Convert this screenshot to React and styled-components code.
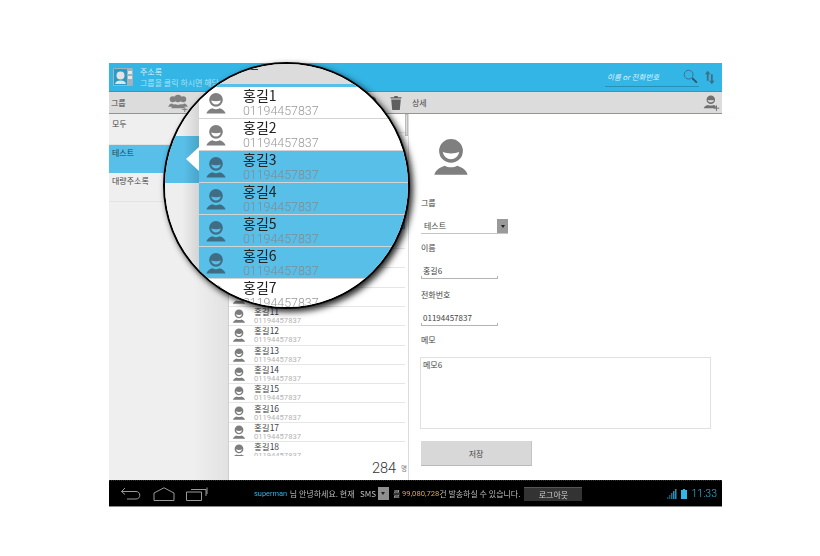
import React from 'react';
import styled, { createGlobalStyle } from 'styled-components';

const KO = `"Noto Sans CJK KR", "Liberation Sans", sans-serif`;
const NUM = `Roboto, "Noto Sans CJK KR", sans-serif`;
const BLUE = '#33b5e5';
const ROW_BLUE = '#58bfe9';

const GlobalStyle = createGlobalStyle`
    html, body { margin: 0; padding: 0; background: #fff; }
    body { font-family: ${KO}; }
`;

const Page = styled.div`
    position: relative;
    width: 613px;
    height: 444px;
    margin: 63px 0 0 109px;
    display: flex;
    flex-direction: column;
    filter: blur(0.3px);
`;

const Header = styled.header`
    height: 28px;
    flex: none;
    display: flex;
    align-items: center;
    background: ${BLUE};
    padding: 0 7px 0 4px;
    box-sizing: border-box;
`;

const AppIcon = styled.svg`
    width: 20px;
    height: 20px;
    flex: none;
`;

const TitleBlock = styled.div`
    margin-left: 7px;
    flex: 1;
    color: #d8f3fc;
`;

const Title = styled.div`
    font-size: 8px;
    line-height: 11px;
`;

const Subtitle = styled.div`
    font-size: 8px;
    line-height: 11px;
    color: #a9e3f7;
`;

const Search = styled.div`
    width: 94px;
    height: 20px;
    margin-right: 6px;
    display: flex;
    align-items: center;
    justify-content: space-between;
    border-bottom: 1px solid #2a8fb8;
    box-sizing: border-box;
    padding: 0 1px 0 2px;
`;

const SearchHint = styled.span`
    font-size: 7.5px;
    font-style: italic;
    color: #d8f3fc;
`;

const Toolbar = styled.div`
    height: 23px;
    flex: none;
    display: grid;
    grid-template-columns: 119px 181px 1fr;
    background: #dcdcdc;
    border-top: 1px solid #2a9ac8;
    border-bottom: 1px solid ${BLUE};
    box-sizing: border-box;
`;

const ToolGroup = styled.div`
    display: flex;
    align-items: center;
    justify-content: ${(p) => p.$justify || 'space-between'};
    padding: 0 ${(p) => p.$right || 0}px 0 ${(p) => p.$left || 0}px;
    color: #5f5f5f;
`;

const ToolLabel = styled.span`
    font-size: 8px;
    color: #444;
`;

const HiddenTool = styled.span`
    display: flex;
    margin-right: 11px;
`;

const Content = styled.div`
    flex: 1;
    min-height: 0;
    display: grid;
    grid-template-columns: 119px 181px 1fr;
`;

const Groups = styled.div`
    background: linear-gradient(to right, #efefef 70%, #e2e2e2);
    padding-top: 2px;
`;

const GroupRow = styled.div`
    height: 28.5px;
    box-sizing: border-box;
    padding: 2px 0 0 3px;
    font-size: 8px;
    color: ${(p) => (p.$active ? '#23414f' : '#444')};
    background: ${(p) => (p.$active ? ROW_BLUE : 'transparent')};
    border-bottom: 1px solid ${(p) => (p.$active ? ROW_BLUE : '#e2e2e2')};
`;

const ListPanel = styled.div`
    position: relative;
    display: flex;
    flex-direction: column;
    background: #fff;
    border-left: 1px solid #cfcfcf;
    border-right: 1px solid #dcdcdc;
    min-height: 0;
`;

const Rows = styled.div`
    height: 342px;
    overflow: hidden;
    padding-right: 3px;
`;

const Row = styled.div`
    height: 19.3px;
    box-sizing: border-box;
    display: flex;
    align-items: center;
    padding-left: 3px;
    background: ${(p) => (p.$active ? ROW_BLUE : '#fff')};
    border-bottom: 1px solid #e6e6e6;
    color: ${(p) => (p.$active ? '#3f6d85' : '#7d7d7d')};
`;

const RowText = styled.div`
    margin-left: 8px;
`;

const RowName = styled.div`
    font-size: 8.5px;
    line-height: 10px;
    color: #444;
`;

const RowPhone = styled.div`
    font-family: ${NUM};
    font-size: 7.6px;
    line-height: 10px;
    color: #b4b4b4;
`;

const Scrollbar = styled.div`
    position: absolute;
    top: 0;
    right: 0;
    width: 3px;
    height: 22px;
    background: #ddd;
    border: 1px solid #bbb;
    box-sizing: border-box;
`;

const ListFooter = styled.div`
    flex: 1;
    display: flex;
    align-items: center;
    justify-content: flex-end;
    padding-right: 1px;
`;

const Count = styled.span`
    font-family: ${NUM};
    font-weight: 300;
    font-size: 14.5px;
    color: #333;
`;

const CountUnit = styled.span`
    font-size: 6.5px;
    color: #777;
    margin-left: 5px;
`;

const Detail = styled.div`
    background: #fff;
    padding: 23px 11px 0 12px;
`;

const BigAvatar = styled.svg`
    display: block;
    width: 38px;
    height: 39px;
    margin-left: 11px;
    color: #7f7f7f;
    filter: blur(0.5px);
`;

const FieldLabel = styled.div`
    height: 12px;
    line-height: 12px;
    font-size: 8px;
    color: #444;
    margin-top: ${(p) => p.$top}px;
`;

const UnderlineField = styled.div`
    position: relative;
    width: ${(p) => p.$width}px;
    height: 15px;
    margin-top: 10px;
    padding-left: 2px;
    box-sizing: border-box;
    font-size: 8px;
    line-height: 14px;
    color: #444;
    border-bottom: 1px solid #b4b4b4;
    &::before,
    &::after {
        content: '';
        position: absolute;
        bottom: 0;
        width: 1px;
        height: 2px;
        background: #b4b4b4;
    }
    &::before {
        left: 0;
    }
    &::after {
        right: 0;
    }
`;

const SelectField = styled.div`
    width: 87px;
    height: 15px;
    margin-top: 10px;
    display: flex;
    justify-content: space-between;
    padding-left: 3px;
    box-sizing: border-box;
    font-size: 8px;
    line-height: 14px;
    color: #444;
    border-bottom: 1px solid #c4c4c4;
`;

const SelectArrow = styled.span`
    width: 11px;
    height: 14px;
    background: #9a9a9a;
    display: flex;
    align-items: center;
    justify-content: center;
    &::after {
        content: '';
        border-left: 2.5px solid transparent;
        border-right: 2.5px solid transparent;
        border-top: 3px solid #222;
    }
`;

const Memo = styled.div`
    width: 291px;
    height: 72px;
    margin: 11px 0 0 -1px;
    padding: 1px 2px;
    box-sizing: border-box;
    border: 1px solid #e0e0e0;
    font-size: 8px;
    line-height: 12px;
    color: #444;
`;

const SaveButton = styled.div`
    width: 111px;
    height: 25px;
    margin-top: 12px;
    background: #d8d8d8;
    border-right: 1px solid #c4c4c4;
    border-bottom: 1px solid #b8b8b8;
    box-sizing: border-box;
    display: flex;
    align-items: center;
    justify-content: center;
    font-size: 8px;
    color: #444;
`;

const NavBar = styled.div`
    height: 27px;
    flex: none;
    box-sizing: border-box;
    background: #000;
    border-top: 1px dotted #333;
    border-bottom: 1px solid #8a8a8a;
    display: flex;
    align-items: center;
    padding: 0 5px 0 11px;
    color: #bdbdbd;
    font-size: 8px;
`;

const NavIcons = styled.div`
    display: flex;
    gap: 11px;
    margin-right: 46px;
`;

const NavText = styled.div`
    display: flex;
    align-items: center;
    white-space: pre;
`;

const UserName = styled.span`
    color: ${BLUE};
    font-family: ${NUM};
    font-size: 7.4px;
    margin-right: 1px;
`;

const Amount = styled.span`
    color: #e6a23c;
    font-family: ${NUM};
    font-size: 7.6px;
`;

const SmsPicker = styled.span`
    width: 11px;
    height: 13px;
    background: #8f8f8f;
    margin: 0 4px 0 2px;
    display: flex;
    align-items: center;
    justify-content: center;
    &::after {
        content: '';
        border-left: 2.5px solid transparent;
        border-right: 2.5px solid transparent;
        border-top: 3px solid #222;
    }
`;

const LogoutButton = styled.div`
    width: 58px;
    height: 14px;
    margin-left: 4px;
    background: #333;
    border-top: 1px solid #555;
    box-sizing: border-box;
    text-align: center;
    line-height: 13px;
    color: #cfcfcf;
`;

const StatusArea = styled.div`
    margin-left: auto;
    display: flex;
    align-items: center;
    gap: 4px;
`;

const Clock = styled.span`
    font-family: ${NUM};
    font-weight: 300;
    font-size: 10.5px;
    color: ${BLUE};
`;

/* magnified part of the list, lies over the page */
const Lens = styled.div`
    position: absolute;
    left: 54px;
    top: -1px;
    width: 247px;
    height: 247px;
    box-sizing: border-box;
    border: 2px solid #000;
    border-radius: 50%;
    overflow: hidden;
    background: #fff;
    display: flex;
    flex-direction: column;
    box-shadow: 3px 3px 6px rgba(0, 0, 0, 0.85);
`;

const LensTop = styled.div`
    height: 20px;
    flex: none;
    background: #dcdcdc;
    border-bottom: 3px solid ${ROW_BLUE};
    display: flex;
    justify-content: center;
`;

const LensTick = styled.span`
    width: 12px;
    height: 1px;
    background: #333;
    margin: 5px 70px 0 0;
`;

const LensBody = styled.div`
    flex: 1;
    min-height: 0;
    display: grid;
    grid-template-columns: 34px 1fr;
`;

const LensSide = styled.div`
    position: relative;
    background: linear-gradient(to right, #eeeeee 50%, #d4d4d4);
    padding-top: 49px;
`;

const LensSelected = styled.div`
    position: relative;
    height: 47px;
    background: linear-gradient(to right, ${ROW_BLUE} 55%, #4aa4c8);
    &::after {
        content: '';
        position: absolute;
        right: 0;
        top: 11px;
        border-top: 12.5px solid transparent;
        border-bottom: 12.5px solid transparent;
        border-right: 13px solid #fff;
    }
`;

const LensList = styled.div`
    min-width: 0;
`;

const LensRow = styled.div`
    height: 32px;
    box-sizing: border-box;
    display: flex;
    align-items: center;
    padding-left: 6px;
    background: ${(p) => (p.$active ? ROW_BLUE : '#fff')};
    border-bottom: 1px solid #d4d4d4;
    color: ${(p) => (p.$active ? '#3f6d85' : '#808080')};
`;

const LensText = styled.div`
    margin-left: 16px;
    padding-top: 1px;
    white-space: nowrap;
`;

const LensName = styled.div`
    font-size: 14px;
    line-height: 15px;
    color: #222;
`;

const LensPhone = styled.div`
    font-family: ${NUM};
    font-weight: 300;
    font-size: 12.4px;
    line-height: 15px;
    color: ${(p) => (p.$active ? '#7f8b92' : '#999')};
`;

const Person = ({ size = 14, ...rest }) => (
    <svg width={size} height={size} viewBox="0 0 24 24" style={{ flex: 'none' }} {...rest}>
        <path
            fill="currentColor"
            fillRule="evenodd"
            d="M12 1a7.500 7.500 0 1 1 0 15a7.500 7.500 0 0 1 0-15zM6.800 9.200c1.500.6 3.200.9 5.200.9s3.700-.3 5.200-.9c-.6 2.800-2.700 4.500-5.200 4.500s-4.600-1.700-5.200-4.500z"
        />
        <path fill="currentColor" d="M1.500 23.500c.8-3 3.500-4.700 6.500-5.700 2.500 1.300 5.500 1.300 8 0 3 1 5.700 2.700 6.500 5.700z" />
    </svg>
);

const PersonAdd = () => (
    <svg width="17" height="17" viewBox="0 0 24 24">
        <g fill="#707070">
            <path
                fillRule="evenodd"
                d="M11 2a6 6 0 1 1 0 12a6 6 0 0 1 0-12zM6.500 8.300c2.800.9 6.200.9 9 0-.5 2.200-2.300 3.500-4.500 3.500s-4-1.300-4.500-3.500z"
            />
            <path d="M1 20c.8-2.500 3-3.700 5.500-4.500 2.800 1.100 6.200 1.100 9 0 1 .3 1.800.7 2.500 1.300V20z" />
        </g>
        <path d="M19 16v8M15 20h8" stroke="#707070" strokeWidth="1.300" />
    </svg>
);

const PeopleAdd = () => (
    <svg width="20" height="18" viewBox="0 0 26 24">
        <g fill="#808080">
            <circle cx="6" cy="7" r="4" />
            <circle cx="20" cy="7" r="4" />
            <path d="M0 17c.8-2.500 2.500-4 5-4.300 1 1 2 1.300 4 1.300v3H0zM26 17c-.8-2.500-2.500-4-5-4.300-1 1-2 1.300-4 1.300v3z" />
            <circle cx="13" cy="6" r="5" />
            <path d="M4 19c1-3 3.500-5 6-5.500 2 1 4 1 6 0 2.500.5 4 1.500 5 3.500v2z" />
        </g>
        <path d="M22 17v7M18.500 20.500h7" stroke="#808080" strokeWidth="1.300" />
    </svg>
);

const Trash = () => (
    <svg width="12" height="14" viewBox="0 0 12 14">
        <path fill="#5f5f5f" d="M4.500 0h3l.5 1.200h3.500v1.300H.5V1.200H4zM1.200 3.500h9.600L9.800 14H2.200z" />
    </svg>
);

const SearchIcon = () => (
    <svg width="15" height="15" viewBox="0 0 16 16" fill="none">
        <circle cx="6" cy="6" r="4.700" stroke="#3f6d85" strokeWidth="1" />
        <path d="M9.800 9.800L14.800 14.600" stroke="#2f5568" strokeWidth="2" />
    </svg>
);

const SortIcon = () => (
    <svg width="10" height="15" viewBox="0 0 11 15" style={{ flex: 'none' }}>
        <path fill="#3f6d85" d="M3 0l3 4H4v7H2V4H0zM6.500 4h2v7h2l-3 4-3-4h2z" />
    </svg>
);

const BackIcon = () => (
    <svg width="22" height="14" viewBox="0 0 22 14" fill="none" stroke="#9a9a9a" strokeWidth="1">
        <path d="M5 1L1.500 4.500L5 7.500M1.500 4.500H16c5 0 5 7.500 0 7.500H7" />
    </svg>
);

const HomeIcon = () => (
    <svg width="22" height="14" viewBox="0 0 22 14" fill="none" stroke="#9a9a9a" strokeWidth="1">
        <path d="M1 6L11 .8L21 6v7.500H1z" />
    </svg>
);

const RecentIcon = () => (
    <svg width="22" height="14" viewBox="0 0 22 14" fill="none" stroke="#9a9a9a" strokeWidth="1">
        <path d="M.5 5h15v8.500H.5zM5 2.500h15V9M21 .5V7" />
    </svg>
);

const SignalIcon = () => (
    <svg width="10" height="10" viewBox="0 0 10 10">
        <g fill="#2a8fb8">
            <rect x="0" y="8" width="1.500" height="2" opacity="0.5" />
            <rect x="2" y="6" width="1.500" height="4" opacity="0.6" />
            <rect x="4" y="4" width="1.500" height="6" opacity="0.8" />
            <rect x="6" y="2" width="1.500" height="8" />
            <rect x="8" y="0" width="1.500" height="10" />
        </g>
    </svg>
);

const BatteryIcon = () => (
    <svg width="6" height="10" viewBox="0 0 6 10">
        <path fill={BLUE} d="M2 0h2v1h2v9H0V1h2z" />
    </svg>
);

const App = () => {
    const rows = Array.from({ length: 18 }, (_, i) => i + 1);
    const lensRows = Array.from({ length: 7 }, (_, i) => i + 1);
    const isActive = (n) => n >= 3 && n <= 6;
    // rows up to 10 sit behind the lens, which shows them itself
    const isCovered = (n) => n <= 10;

    return (
        <Page>
            <GlobalStyle />
            <Header>
                <AppIcon viewBox="0 0 20 20">
                    <rect x="0" y="1" width="20" height="18" rx="1.500" fill="#9fb4bb" />
                    <rect x="1" y="2" width="13" height="16" fill="#2a9ac8" />
                    <rect x="15" y="4" width="4" height="3" fill="#e6e6e6" />
                    <rect x="15" y="9" width="4" height="3" fill="#e6e6e6" />
                    <circle cx="7.500" cy="8.500" r="4" fill="#e4e4e4" />
                    <path d="M2 17c.5-2.500 2.500-3.500 5.500-3.500s5 1 5.500 3.500z" fill="#e4e4e4" />
                </AppIcon>
                <TitleBlock>
                    <Title>주소록</Title>
                    <Subtitle>그룹을 클릭 하시면 해당</Subtitle>
                </TitleBlock>
                <Search>
                    <SearchHint>이름 or 전화번호</SearchHint>
                    <SearchIcon />
                </Search>
                <SortIcon />
            </Header>
            <Toolbar>
                <ToolGroup $left={2} $right={40}>
                    <ToolLabel>그룹</ToolLabel>
                    <PeopleAdd />
                </ToolGroup>
                <ToolGroup $justify="flex-end" $right={7}>
                    <HiddenTool>
                        <Person size={14} />
                    </HiddenTool>
                    <Trash />
                </ToolGroup>
                <ToolGroup $left={3} $right={2}>
                    <ToolLabel>상세</ToolLabel>
                    <PersonAdd />
                </ToolGroup>
            </Toolbar>
            <Content>
                <Groups>
                    <GroupRow>모두</GroupRow>
                    <GroupRow $active>테스트</GroupRow>
                    <GroupRow>대량주소록</GroupRow>
                </Groups>
                <ListPanel>
                    <Rows>
                        {rows.map((n) => (
                            <Row key={n} $active={isActive(n)}>
                                <Person size={14} />
                                {!isCovered(n) && (
                                    <RowText>
                                        <RowName>홍길{n}</RowName>
                                        <RowPhone>01194457837</RowPhone>
                                    </RowText>
                                )}
                            </Row>
                        ))}
                    </Rows>
                    <Scrollbar />
                    <ListFooter>
                        <Count>284</Count>
                        <CountUnit>명</CountUnit>
                    </ListFooter>
                </ListPanel>
                <Detail>
                    <BigAvatar as={Person} size={39} />
                    <FieldLabel $top={21}>그룹</FieldLabel>
                    <SelectField>
                        테스트
                        <SelectArrow />
                    </SelectField>
                    <FieldLabel $top={8}>이름</FieldLabel>
                    <UnderlineField $width={77}>홍길6</UnderlineField>
                    <FieldLabel $top={10}>전화번호</FieldLabel>
                    <UnderlineField $width={77}>01194457837</UnderlineField>
                    <FieldLabel $top={8}>메모</FieldLabel>
                    <Memo>메모6</Memo>
                    <SaveButton>저장</SaveButton>
                </Detail>
            </Content>
            <NavBar>
                <NavIcons>
                    <BackIcon />
                    <HomeIcon />
                    <RecentIcon />
                </NavIcons>
                <NavText>
                    <UserName>superman</UserName> 님 안녕하세요. 현재   SMS
                    <SmsPicker />를 <Amount>99,080,728</Amount>건 발송하실 수 있습니다.
                </NavText>
                <LogoutButton>로그아웃</LogoutButton>
                <StatusArea>
                    <SignalIcon />
                    <BatteryIcon />
                    <Clock>11:33</Clock>
                </StatusArea>
            </NavBar>
            <Lens>
                <LensTop>
                    <LensTick />
                </LensTop>
                <LensBody>
                    <LensSide>
                        <LensSelected />
                    </LensSide>
                    <LensList>
                        {lensRows.map((n) => (
                            <LensRow key={n} $active={isActive(n)}>
                                <Person size={22} />
                                <LensText>
                                    <LensName>홍길{n}</LensName>
                                    <LensPhone $active={isActive(n)}>01194457837</LensPhone>
                                </LensText>
                            </LensRow>
                        ))}
                    </LensList>
                </LensBody>
            </Lens>
        </Page>
    );
};

export default App;
